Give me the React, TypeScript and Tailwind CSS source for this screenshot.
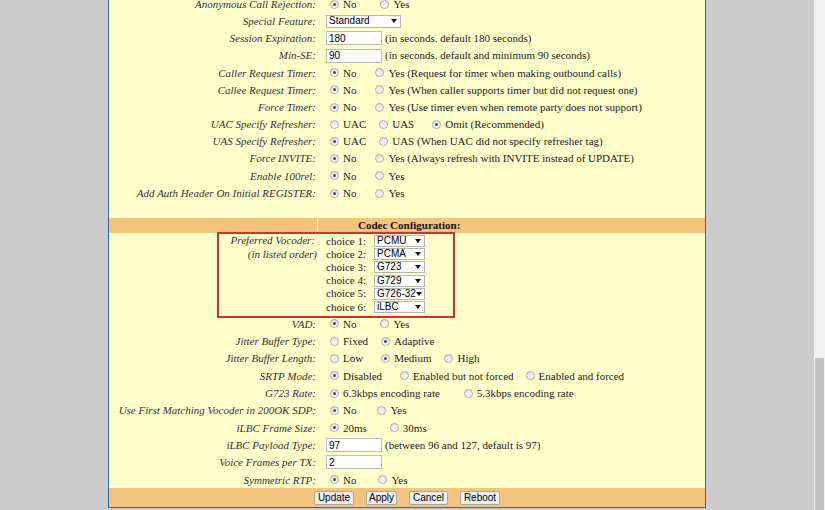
import React from 'react';

type Opt = { t: string; on?: boolean; ml?: string };

const ORANGE = 'bg-[#f4c47e]';

function Radio({ on }: { on?: boolean }) {
  return (
    <span className="w-[9px] h-[9px] shrink-0 mr-[4px] rounded-full border border-[#a9a9a9] bg-linear-to-b from-[#e4e4e4] to-[#fbfbfb] flex items-center justify-center">
      {on && <span className="w-[3px] h-[3px] rounded-full bg-[#4a4a4a]" />}
    </span>
  );
}

function Arrow() {
  return (
    <svg width="6" height="4" viewBox="0 0 6 4" className="shrink-0">
      <polygon points="0,0 6,0 3,4" fill="#111" />
    </svg>
  );
}

function FakeSelect({ value, size }: { value: string; size: string }) {
  return (
    <div className={`${size} bg-white border border-[#b4b4b4] flex items-center justify-between pl-[2px] pr-[3px] font-['Liberation_Sans',Arial,sans-serif] text-[10px] leading-none text-black`}>
      <span className="whitespace-nowrap">{value}</span>
      <Arrow />
    </div>
  );
}

function TextBox({ value }: { value: string }) {
  return (
    <input
      defaultValue={value}
      className="w-[56px] h-[14px] border border-[#bcbcbc] bg-white pl-[2px] font-['Liberation_Sans',Arial,sans-serif] text-[10px] leading-[12px] text-black outline-none"
    />
  );
}

function Radios({ opts }: { opts: Opt[] }) {
  return (
    <>
      {opts.map((o, i) => (
        <span key={i} className={`flex items-center ${i === 0 ? 'ml-[4px]' : o.ml}`}>
          <Radio on={o.on} />
          <span className="whitespace-nowrap">{o.t}</span>
        </span>
      ))}
    </>
  );
}

function Row({ label, h, children }: { label: string; h: string; children: React.ReactNode }) {
  return (
    <div className={`flex items-center ${h}`}>
      <div className="w-[209px] shrink-0 text-right pr-[2px] italic text-[#333] whitespace-nowrap">{label}</div>
      <div className="flex items-center pl-[8px] text-[#222]">{children}</div>
    </div>
  );
}

type Item =
  | { label: string; radios: Opt[] }
  | { label: string; input: string; note?: string }
  | { label: string; select: string };

const top: Item[] = [
  { label: 'Anonymous Call Rejection:', radios: [{ t: 'No', on: true }, { t: 'Yes', ml: 'ml-[24px]' }] },
  { label: 'Special Feature:', select: 'Standard' },
  { label: 'Session Expiration:', input: '180', note: '(in seconds. default 180 seconds)' },
  { label: 'Min-SE:', input: '90', note: '(in seconds. default and minimum 90 seconds)' },
  { label: 'Caller Request Timer:', radios: [{ t: 'No', on: true }, { t: 'Yes (Request for timer when making outbound calls)', ml: 'ml-[19px]' }] },
  { label: 'Callee Request Timer:', radios: [{ t: 'No', on: true }, { t: 'Yes (When caller supports timer but did not request one)', ml: 'ml-[19px]' }] },
  { label: 'Force Timer:', radios: [{ t: 'No', on: true }, { t: 'Yes (Use timer even when remote party does not support)', ml: 'ml-[19px]' }] },
  { label: 'UAC Specify Refresher:', radios: [{ t: 'UAC' }, { t: 'UAS', ml: 'ml-[13px]' }, { t: 'Omit (Recommended)', on: true, ml: 'ml-[18px]' }] },
  { label: 'UAS Specify Refresher:', radios: [{ t: 'UAC', on: true }, { t: 'UAS (When UAC did not specify refresher tag)', ml: 'ml-[13px]' }] },
  { label: 'Force INVITE:', radios: [{ t: 'No', on: true }, { t: 'Yes (Always refresh with INVITE instead of UPDATE)', ml: 'ml-[19px]' }] },
  { label: 'Enable 100rel:', radios: [{ t: 'No', on: true }, { t: 'Yes', ml: 'ml-[19px]' }] },
  { label: 'Add Auth Header On Initial REGISTER:', radios: [{ t: 'No', on: true }, { t: 'Yes', ml: 'ml-[19px]' }] },
];

const bottom: Item[] = [
  { label: 'VAD:', radios: [{ t: 'No', on: true }, { t: 'Yes', ml: 'ml-[24px]' }] },
  { label: 'Jitter Buffer Type:', radios: [{ t: 'Fixed' }, { t: 'Adaptive', on: true, ml: 'ml-[13px]' }] },
  { label: 'Jitter Buffer Length:', radios: [{ t: 'Low' }, { t: 'Medium', on: true, ml: 'ml-[18px]' }, { t: 'High', ml: 'ml-[13px]' }] },
  { label: 'SRTP Mode:', radios: [{ t: 'Disabled', on: true }, { t: 'Enabled but not forced', ml: 'ml-[18px]' }, { t: 'Enabled and forced', ml: 'ml-[12px]' }] },
  { label: 'G723 Rate:', radios: [{ t: '6.3kbps encoding rate', on: true }, { t: '5.3kbps encoding rate', ml: 'ml-[24px]' }] },
  { label: 'Use First Matching Vocoder in 200OK SDP:', radios: [{ t: 'No', on: true }, { t: 'Yes', ml: 'ml-[21px]' }] },
  { label: 'iLBC Frame Size:', radios: [{ t: '20ms', on: true }, { t: '30ms', ml: 'ml-[23px]' }] },
  { label: 'iLBC Payload Type:', input: '97', note: '(between 96 and 127, default is 97)' },
  { label: 'Voice Frames per TX:', input: '2' },
  { label: 'Symmetric RTP:', radios: [{ t: 'No', on: true }, { t: 'Yes', ml: 'ml-[22px]' }] },
];

function renderItem(it: Item, h: string) {
  return (
    <Row key={it.label} label={it.label} h={h}>
      {'radios' in it && <Radios opts={it.radios} />}
      {'select' in it && <FakeSelect value={it.select} size="w-[75px] h-[13px]" />}
      {'input' in it && (
        <>
          <TextBox value={it.input} />
          {it.note && <span className="ml-[3px] whitespace-nowrap">{it.note}</span>}
        </>
      )}
    </Row>
  );
}

const choices = ['PCMU', 'PCMA', 'G723', 'G729', 'G726-32', 'iLBC'];

export default function App() {
  return (
    <div className="h-[510px] overflow-hidden bg-[#cccccc] flex font-['Liberation_Serif','Times_New_Roman',serif] text-[11px]">
      <div className="w-[108px] shrink-0" />
      <div className="w-[598px] shrink-0 self-start -mt-[4.6px] bg-[#ffffcc] border-x border-b border-[#2f6aa3]">
        {top.map((it) => renderItem(it, 'h-[17.2px]'))}

        <div className="h-[16.2px]" />

        {/* Codec header */}
        <div className="flex h-[15px] gap-[1px]">
          <div className={`w-[208px] shrink-0 ${ORANGE}`} />
          <div className={`flex-1 ${ORANGE} pl-[40px] font-bold text-[#111] leading-[15px]`}>Codec Configuration:</div>
        </div>

        {/* Preferred vocoder block */}
        <div className="relative flex pt-[1.5px] pb-[1.7px]">
          <div className="w-[209px] shrink-0 flex flex-col items-end pr-[1px] italic text-[#333]">
            <div className="h-[13.2px] leading-[13.2px] pr-[2px]">Preferred Vocoder:</div>
            <div className="h-[13.2px] leading-[13.2px]">(in listed order)</div>
          </div>
          <div className="flex flex-col pl-[8px] text-[#222]">
            {choices.map((c, i) => (
              <div key={c} className="flex items-center h-[13.2px]">
                <span className="w-[48px] whitespace-nowrap">choice {i + 1}:</span>
                <FakeSelect value={c} size="w-[51px] h-[12px]" />
              </div>
            ))}
          </div>
          <div className="absolute left-[108px] -top-[1px] w-[238px] h-[86px] border-2 border-[#e32a2a] pointer-events-none" />
        </div>

        {bottom.map((it) => renderItem(it, 'h-[17.33px]'))}

        {/* Buttons */}
        <div className={`h-[19px] ${ORANGE} flex items-center justify-center gap-[12px] font-['Liberation_Sans',Arial,sans-serif] text-[10px] text-black`}>
          {[
            ['Update', 'w-[40px]'],
            ['Apply', 'w-[31px]'],
            ['Cancel', 'w-[39px]'],
            ['Reboot', 'w-[40px]'],
          ].map(([t, w]) => (
            <button key={t} className={`${w} h-[14px] border border-[#a6a6a6] bg-[#efefef] rounded-[2px] leading-none flex items-center justify-center`}>
              {t}
            </button>
          ))}
        </div>
      </div>
      <div className="flex-1" />
      <div className="w-[11px] shrink-0 flex flex-col bg-[#f1f1f1]">
        <div className="h-[358px]" />
        <div className="flex-1 mx-[1px] bg-[#c1c1c1]" />
      </div>
    </div>
  );
}
